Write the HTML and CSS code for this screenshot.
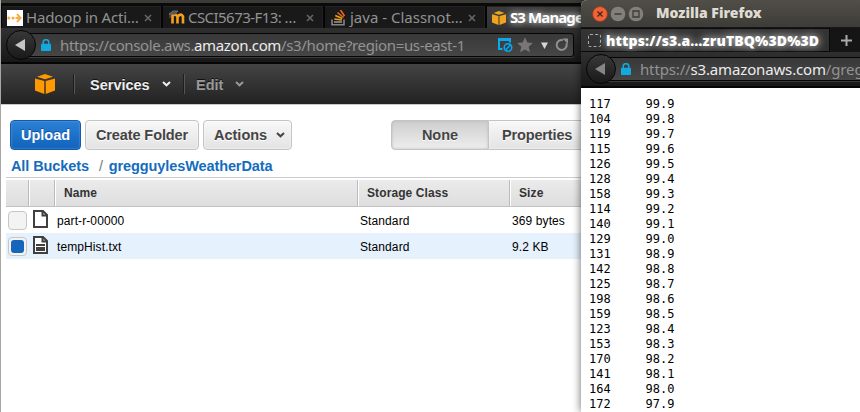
FILE: index.html
```html
<!DOCTYPE html>
<html lang="en">
<head>
<meta charset="utf-8">
<title>S3 Management Console</title>
<link rel="stylesheet" href="styles.css">
</head>
<body>
<svg width="0" height="0" class="defs">
  <symbol id="cube" viewBox="0 0 20 20"><path d="M0 4.600 9.300 7v13L0 16.600zM20 4.600 10.700 7v13L20 16.600zM2 2.700 10 0l8 2.700L10 5.300z"/></symbol>
  <symbol id="chev" viewBox="0 0 9 6"><path d="M1 1l3.500 3.300L8 1" fill="none" stroke="currentColor" stroke-width="2"/></symbol>
  <symbol id="lock" viewBox="0 0 10 12"><path d="M2.200 6V3.500a2.800 2.800 0 0 1 5.600 0V6" fill="none" stroke="#12a9e0" stroke-width="1.500"/><rect y="4.700" width="10" height="7.300" rx="1" fill="#12a9e0"/></symbol>
  <symbol id="x" viewBox="0 0 8 8"><path d="M1 1l6 6M7 1L1 7" stroke="#686868" stroke-width="1.500"/></symbol>
</svg>
<section class="window main">
  <div class="frame-top"></div>
  <div class="tabs">
    <div class="tab"><svg class="fav" viewBox="0 0 16 16"><path fill="#fff" d="M0 0h16v16H0z"/><g fill="#f7ad45"><circle cx="1.800" cy="8" r="1.500"/><circle cx="6" cy="8" r="1.600"/><path d="M8.500 7h2.500L9.300 4.500l1.400-1L15 8l-4.300 4.500-1.400-1L11 9H8.500z"/></g></svg><span class="t1">Hadoop in Acti…</span><svg class="close"><use href="#x"/></svg></div>
    <div class="tab"><svg class="fav" viewBox="0 0 16 16"><path d="M3.500 13.500V4.500M3.500 6q2.500-3 5 .5v7M8.500 7q3-4.500 5.500-.5v7" fill="none" stroke="#f5a11d" stroke-width="2.600"/><path d="M0 4l4-3 5 0-3 3.500zM1 4v4" fill="#555" stroke="#777" stroke-width=".8"/></svg><span class="t2">CSCI5673-F13: …</span><svg class="close"><use href="#x"/></svg></div>
    <div class="tab"><svg class="fav" viewBox="0 0 16 16"><path d="M1 9.500v5.300h12V9.500" fill="none" stroke="#858585" stroke-width="1.600"/><path d="M3 12h8" stroke="#949494" stroke-width="1.600"/><path d="M3.300 9l7.500 1M4.300 5.400l7 3" stroke="#eaa016" stroke-width="1.600"/><path d="M6.500 2.500l6 5M9.500 0l4 6" stroke="#e96721" stroke-width="1.600"/></svg><span class="t3">java - Classnot…</span><svg class="close"><use href="#x"/></svg></div>
    <div class="tab active"><svg class="fav cube" fill="#f0a31d"><use href="#cube"/></svg><span class="t4">S3 Manage</span></div>
  </div>
  <div class="nav">
    <div class="back"><svg viewBox="0 0 12 14"><path d="M1 7l10-6v12z" fill="#c4c4c4"/></svg></div>
    <div class="url"><svg class="lock"><use href="#lock"/></svg><span class="address u1">https://console.aws.<b>amazon.com</b>/s3/home?region=us-east-1</span>
      <svg class="tools" viewBox="0 0 74 16"><path d="M5.500 12H2V2h11v3.500" fill="none" stroke="#0aa8ef" stroke-width="2"/><path d="M1 2.500h13" stroke="#0aa8ef" stroke-width="3"/><circle cx="11" cy="10.500" r="3.800" fill="#294653" stroke="#0aa8ef" stroke-width="1.500"/><path d="M8.500 13l5-5" stroke="#0aa8ef" stroke-width="1.500"/><path d="M28 .3l2.300 5.100 5.500.6-4.100 3.700 1.200 5.500L28 12.400l-4.900 2.800 1.200-5.500L20.200 6l5.500-.6z" fill="#777"/><path d="M44 5.500h7l-3.500 6.500z" fill="#d6d6d6"/><path d="M69.400 6.300A5 5 0 1 1 66 3.100" fill="none" stroke="#8f8f8f" stroke-width="2"/><path d="M65.500 1.500H71V7z" fill="#8f8f8f"/></svg></div>
  </div>
  <header class="aws"><svg class="logo" fill="#ff9900"><use href="#cube"/></svg><i></i><strong>Services</strong><svg class="chev"><use href="#chev"/></svg><i></i><strong class="edit">Edit</strong><svg class="chev dim"><use href="#chev"/></svg></header>
  <main>
    <div class="toolbar"><button class="primary">Upload</button><button class="create">Create Folder</button><button class="actions">Actions<svg class="chev"><use href="#chev"/></svg></button>
      <div class="segment"><button class="none">None</button><button class="props">Properties</button></div></div>
    <div class="crumbs"><a>All Buckets</a><span>/</span><a>gregguylesWeatherData</a></div>
    <div class="table">
      <div class="row head"><div></div><div></div><div>Name</div><div>Storage Class</div><div>Size</div></div>
      <div class="row"><div><span class="check"></span></div><div><svg class="doc" viewBox="0 0 15 18"><path d="M1 1h9l4 4v12H1zM9.500 1v4.500H14" fill="#fff" stroke="#404040" stroke-width="2"/></svg></div><div>part-r-00000</div><div>Standard</div><div>369 bytes</div></div>
      <div class="row selected"><div><span class="check on"></span></div><div><svg class="doc" viewBox="0 0 15 18"><path d="M1 1h9l4 4v12H1zM9.500 1v4.500H14" fill="#fff" stroke="#404040" stroke-width="2"/><path d="M3 9h9" stroke="#404040" stroke-width="2"/><path d="M3 13h9" stroke="#404040" stroke-width="4"/></svg></div><div>tempHist.txt</div><div>Standard</div><div>9.2 KB</div></div>
    </div>
  </main>
</section>
<section class="window popup">
  <div class="title"><svg viewBox="0 0 54 18"><circle cx="9" cy="9" r="7.500" fill="#ed6439" stroke="#973b20"/><path d="M6.500 6.500l5 5m0-5l-5 5" stroke="#4b2015" stroke-width="1.300"/><circle cx="27" cy="9" r="7.300" fill="#81807a"/><path d="M23.500 9h7" stroke="#3c3b37" stroke-width="1.300"/><circle cx="45" cy="9" r="7.300" fill="#81807a"/><path d="M42 6h6v6h-6z" fill="none" stroke="#3c3b37" stroke-width="1.300"/></svg><b>Mozilla Firefox</b></div>
  <div class="ptabs"><div class="ptab"><span class="blank"></span><b>https://s3.a…zruTBQ%3D%3D</b></div><div class="plus"><svg viewBox="0 0 11 11"><path d="M5.500 0v11M0 5.500h11" stroke="#aaa" stroke-width="2"/></svg></div></div>
  <div class="nav">
    <div class="back"><svg viewBox="0 0 12 14"><path d="M1 7l10-6v12z" fill="#858585"/></svg></div>
    <div class="url"><svg class="lock"><use href="#lock"/></svg><span class="address u2">https://<b>s3.amazonaws.com</b>/greg</span></div>
  </div>
  <pre>117	99.9
104	99.8
119	99.7
115	99.6
126	99.5
128	99.4
158	99.3
114	99.2
140	99.1
129	99.0
131	98.9
142	98.8
125	98.7
198	98.6
159	98.5
123	98.4
153	98.3
170	98.2
141	98.1
164	98.0
172	97.9</pre>
</section>
</body>
</html>
```
FILE: styles.css
```css
* { box-sizing: border-box; }
body { margin: 0; width: 860px; height: 412px; overflow: hidden; position: relative; background: #fff; font-family: "Liberation Sans", Arial, sans-serif; }
svg { display: block; flex: none; }
.defs { position: absolute; }
.window { position: absolute; top: 0; height: 412px; overflow: hidden; background: #fff; }
.main { left: 0; width: 590px; border-left: 1px solid #aaa6a0; }
.frame-top { height: 6px; background: #3c3b37; border-bottom: 3px solid #0a0a0a; }
.tabs { display: flex; height: 22px; gap: 2px; background: #050505; padding-left: 1px; font-family: "Noto Sans", sans-serif; font-size: 15px; color: #929292; }
.tab { width: 159px; height: 22px; flex: none; display: flex; align-items: center; padding: 0 8px 0 5px; background: #191919; border: 1px solid #222; border-width: 1px 1px 0 0; white-space: nowrap; }
.tab span { margin-top: -2px; }
.tab + .tab { width: 160px; padding-left: 6px; }
.fav { width: 16px; height: 16px; margin-right: 3px; }
.tab .cube { width: 14px; height: 14px; margin-right: 4px; }
.close { width: 8px; height: 8px; margin-left: auto; }
.tab.active { background: linear-gradient(#3b3b3b, #333); color: #fff; font-weight: bold; text-shadow: 0 0 7px #fff; padding-left: 5px; }
.t1 { letter-spacing: -.15px; }
.t2 { letter-spacing: -.55px; }
.t3 { letter-spacing: 0; }
.t4 { letter-spacing: -.9px; }
.nav { height: 36px; padding: 5px 9px 0 0; position: relative; display: flex; background: linear-gradient(#303030, #181818); border-bottom: 2px solid #050505; }
.url { flex: 1; height: 24px; margin-left: 20px; padding-left: 19px; display: flex; align-items: center; background: linear-gradient(#393939, #464646); border: 1px solid #050505; border-radius: 3px; box-shadow: 0 1px #3b3b3b; overflow: hidden; }
.back { position: absolute; left: 5px; top: 2px; width: 30px; height: 30px; border: 1px solid #050505; border-radius: 50%; background: linear-gradient(#383838, #191919); display: flex; align-items: center; padding-left: 7px; }
.back svg { width: 12px; height: 14px; }
.lock { width: 10px; height: 12px; }
.address { font-family: "Noto Sans", sans-serif; font-size: 15px; color: #939393; margin-left: 9px; white-space: nowrap; }
.address b { font-weight: normal; color: #ececec; }
.u1 { letter-spacing: -.36px; }
.u2 { letter-spacing: -.15px; }
.tools { width: 74px; height: 16px; margin: 0 2px 0 auto; }
.main .nav { padding-right: 16px; }
.aws { height: 40px; display: flex; align-items: center; background: linear-gradient(#444, #222); color: #eee; font-size: 14.500px; padding-left: 34px; text-shadow: 0 -1px #111; }
.aws strong { padding-top: 1px; }
.logo { width: 20px; height: 20px; }
.aws i { width: 2px; height: 20px; margin: 0 15px 0 18px; background: #1e1e1e; border-right: 1px solid #555; }
.aws strong { width: 60px; }
.aws .edit { width: 28px; color: #999; margin-left: -4px; }
.chev { width: 9px; height: 6px; margin-left: 12px; color: #eee; }
.aws .chev + i { margin-left: 12px; }
.aws .dim { color: #999; margin-left: 11px; }
main { border-top: 1px solid #c9c9c9; padding: 15px 0 0 5px; }
.toolbar { display: flex; gap: 4px; height: 32px; padding-left: 4px; }
button { flex: none; height: 30px; padding: 0; border: 1px solid #c4c4c4; border-radius: 4px; background: linear-gradient(#f8f8f8, #e3e3e3); font: bold 14.500px "Liberation Sans", sans-serif; color: #444; text-shadow: 0 1px #fff; box-shadow: inset 0 0 2px #fff; }
.primary { width: 71px; background: linear-gradient(#2b80d4, #1163bc); border-color: #155ba9; color: #fff; text-shadow: 0 -1px #135298; box-shadow: inset 0 0 2px #68aaf0; }
.create { width: 114px; letter-spacing: -.1px; }
.actions { width: 89px; display: flex; align-items: center; padding-left: 10px; }
.actions .chev { color: #444; margin-left: 9px; }
.segment { display: flex; flex: none; margin-left: 95px; }
.none { width: 98px; border-radius: 4px 0 0 4px; background: linear-gradient(#cecece, #eee); box-shadow: inset 0 0 3px #bbb; }
.props { width: 110px; border-left: 0; border-radius: 0; text-align: left; padding-left: 13px; letter-spacing: -.15px; }
.crumbs { height: 25px; padding: 5px 0 0 5px; display: flex; font: bold 14.500px/18px "Liberation Sans", sans-serif; letter-spacing: -.1px; color: #146cbe; }
.crumbs span { color: #777; font-weight: normal; margin: 0 6px 0 10px; }
.table { border-top: 1px solid #ccc; padding-top: 2px; font-size: 12px; color: #000; }
.row { display: grid; grid-template-columns: 23px 26px 303px 152px 100px; height: 26px; align-items: center; }
.row > div:nth-child(n+3) { padding: 2px 0 0 2px; letter-spacing: .1px; }
.head { height: 27px; background: linear-gradient(#ebebeb, #dedede); border-bottom: 1px solid #c3c3c3; color: #333; font-weight: bold; align-items: stretch; line-height: 26px; }
.head > div { border-right: 1px solid #bbb; box-shadow: 1px 0 #fff; }
.row.head > div:nth-child(n+3) { padding: 0 0 0 9px; }
.check { display: block; width: 19px; height: 19px; margin-left: 2px; border: 1px solid #c6c6c6; border-radius: 4px; background: #f3f3f3; padding: 2px; }
.on::after { content: ""; display: block; width: 13px; height: 13px; border-radius: 3px; background: #1565bd; }
.doc { width: 15px; height: 18px; margin-left: 4px; margin-top: -3px; }
.selected { background: #e5f1fd; }
.popup { left: 581px; width: 279px; box-shadow: 0 0 8px #0009; border-top-left-radius: 6px; }
.title { height: 28px; display: flex; align-items: center; padding-left: 10px; background: linear-gradient(#504e47, #3d3c38); border-bottom: 1px solid #161616; color: #dfdbd2; font: bold 14px "Noto Sans", sans-serif; }
.title svg { width: 54px; height: 18px; margin-right: 11px; }
.title b { margin-top: -2px; }
.ptabs { height: 24px; display: flex; background: #151515; }
.ptab { width: 249px; display: flex; align-items: center; padding-left: 7px; background: linear-gradient(#343434, #303030); border: 1px solid #090909; border-left: 0; color: #fff; font: bold 14px "Noto Sans", sans-serif; letter-spacing: .1px; text-shadow: 0 0 8px #fff; white-space: nowrap; }
.blank { width: 13px; height: 13px; border: 1px dashed #aaa; margin-right: 5px; border-radius: 2px; flex: none; }
.plus { flex: 1; display: flex; align-items: center; justify-content: center; padding-left: 3px; }
.plus svg { width: 11px; height: 11px; }
.popup .nav { padding-right: 0; }
.popup .url { border-radius: 0; border-right: 0; }
pre { margin: 9px 0 0 8px; font: 12px/15px "DejaVu Sans Mono", monospace; color: #000; tab-size: 56.500px; }
```
